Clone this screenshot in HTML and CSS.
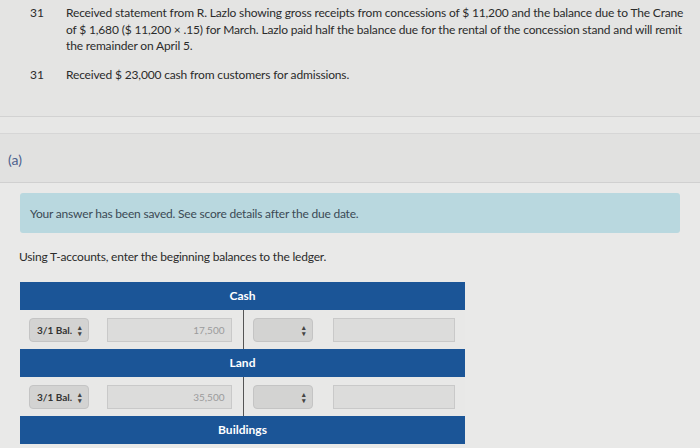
FILE: index.html
```html
<!DOCTYPE html>
<html lang="en">
<head>
  <meta charset="UTF-8">
  <title>T-Accounts</title>
  <link rel="stylesheet" href="styles.css">
</head>
<body>
  <div class="problem">
    <div class="entry">
      <div class="day">31</div>
      <div class="desc">Received statement from R. Lazlo showing gross receipts from concessions of $ 11,200 and the balance due to The Crane of $ 1,680 ($ 11,200 × .15) for March. Lazlo paid half the balance due for the rental of the concession stand and will remit the remainder on April 5.</div>
    </div>
    <div class="entry">
      <div class="day">31</div>
      <div class="desc">Received $ 23,000 cash from customers for admissions.</div>
    </div>
  </div>
  <div class="spacer"></div>
  <div class="part">(a)</div>

  <div class="content">
    <div class="alert">Your answer has been saved. See score details after the due date.</div>
    <p class="instructions">Using T-accounts, enter the beginning balances to the ledger.</p>

    <div class="ledger">
      <div class="account-title">Cash</div>
      <div class="account-row">
        <div class="side">
          <div class="select">3/1 Bal.</div>
          <div class="amount">17,500</div>
        </div>
        <div class="side side-right">
          <div class="select"></div>
          <div class="amount"></div>
        </div>
      </div>
      <div class="account-title">Land</div>
      <div class="account-row">
        <div class="side">
          <div class="select">3/1 Bal.</div>
          <div class="amount">35,500</div>
        </div>
        <div class="side side-right">
          <div class="select"></div>
          <div class="amount"></div>
        </div>
      </div>
      <div class="account-title">Buildings</div>
    </div>
  </div>
</body>
</html>
```

FILE: styles.css
```css
body {
  margin: 0;
  font-family: Lato, 'Noto Sans', sans-serif;
  font-size: 12px;
  color: #2b2b2b;
  background: #e9e9e8;
}
.problem {
  background: #e4e4e3;
  padding: 5px 10px 0 30px;
  height: 111px;
  border-bottom: 1px solid #d2d2d2;
}
.entry {
  display: flex;
  margin-bottom: 12px;
  line-height: 16.5px;
}
.day {
  width: 36px;
  flex: none;
}
.desc {
  letter-spacing: -0.16px;
}
.spacer {
  height: 16px;
  background: #e7e7e6;
  border-bottom: 1px solid #d6d6d6;
}
.part {
  height: 48px;
  background: #e1e1e0;
  border-bottom: 1px solid #d0d0d0;
  padding-left: 8px;
  line-height: 52px;
  font-size: 14px;
  color: #4c5f8c;
}
.content {
  padding: 10px 20px 0 20px;
}
.alert {
  background: #b9d8df;
  border-radius: 3px;
  height: 40px;
  line-height: 42px;
  padding-left: 10px;
  color: #3b4a55;
  letter-spacing: -0.2px;
}
.instructions {
  margin: 17px 0 18px -1px;
  line-height: 14px;
  letter-spacing: -0.2px;
}
.ledger {
  width: 445px;
  background: #e8e8e7;
}
.account-title {
  height: 28px;
  line-height: 27px;
  background: #1b5597;
  color: #fff;
  font-weight: bold;
  text-align: center;
}
.account-row {
  display: flex;
  height: 39px;
}
.side {
  flex: 1;
  display: flex;
  align-items: center;
  padding: 0 11px 0 9px;
  gap: 18px;
}
.side-right {
  border-left: 1px solid #555;
  padding: 0 10px 0 9px;
  gap: 20px;
}
.select {
  width: 51px;
  height: 22px;
  flex: none;
  border: 1px solid #c4c4c4;
  border-radius: 4px;
  background: #d3d3d2;
  font-size: 10px;
  font-weight: bold;
  line-height: 22px;
  padding-left: 7px;
  position: relative;
  color: #333;
}
.select::after {
  content: '\25B4\A\25BE';
  white-space: pre;
  position: absolute;
  right: 6px;
  top: 5px;
  font-size: 7px;
  line-height: 6px;
  color: #444;
}
.amount {
  flex: 1;
  height: 22px;
  border: 1px solid #c9c9c9;
  background: #dcdcdb;
  text-align: right;
  padding-right: 6px;
  line-height: 22px;
  font-size: 10px;
  color: #9b9b9b;
}
```
